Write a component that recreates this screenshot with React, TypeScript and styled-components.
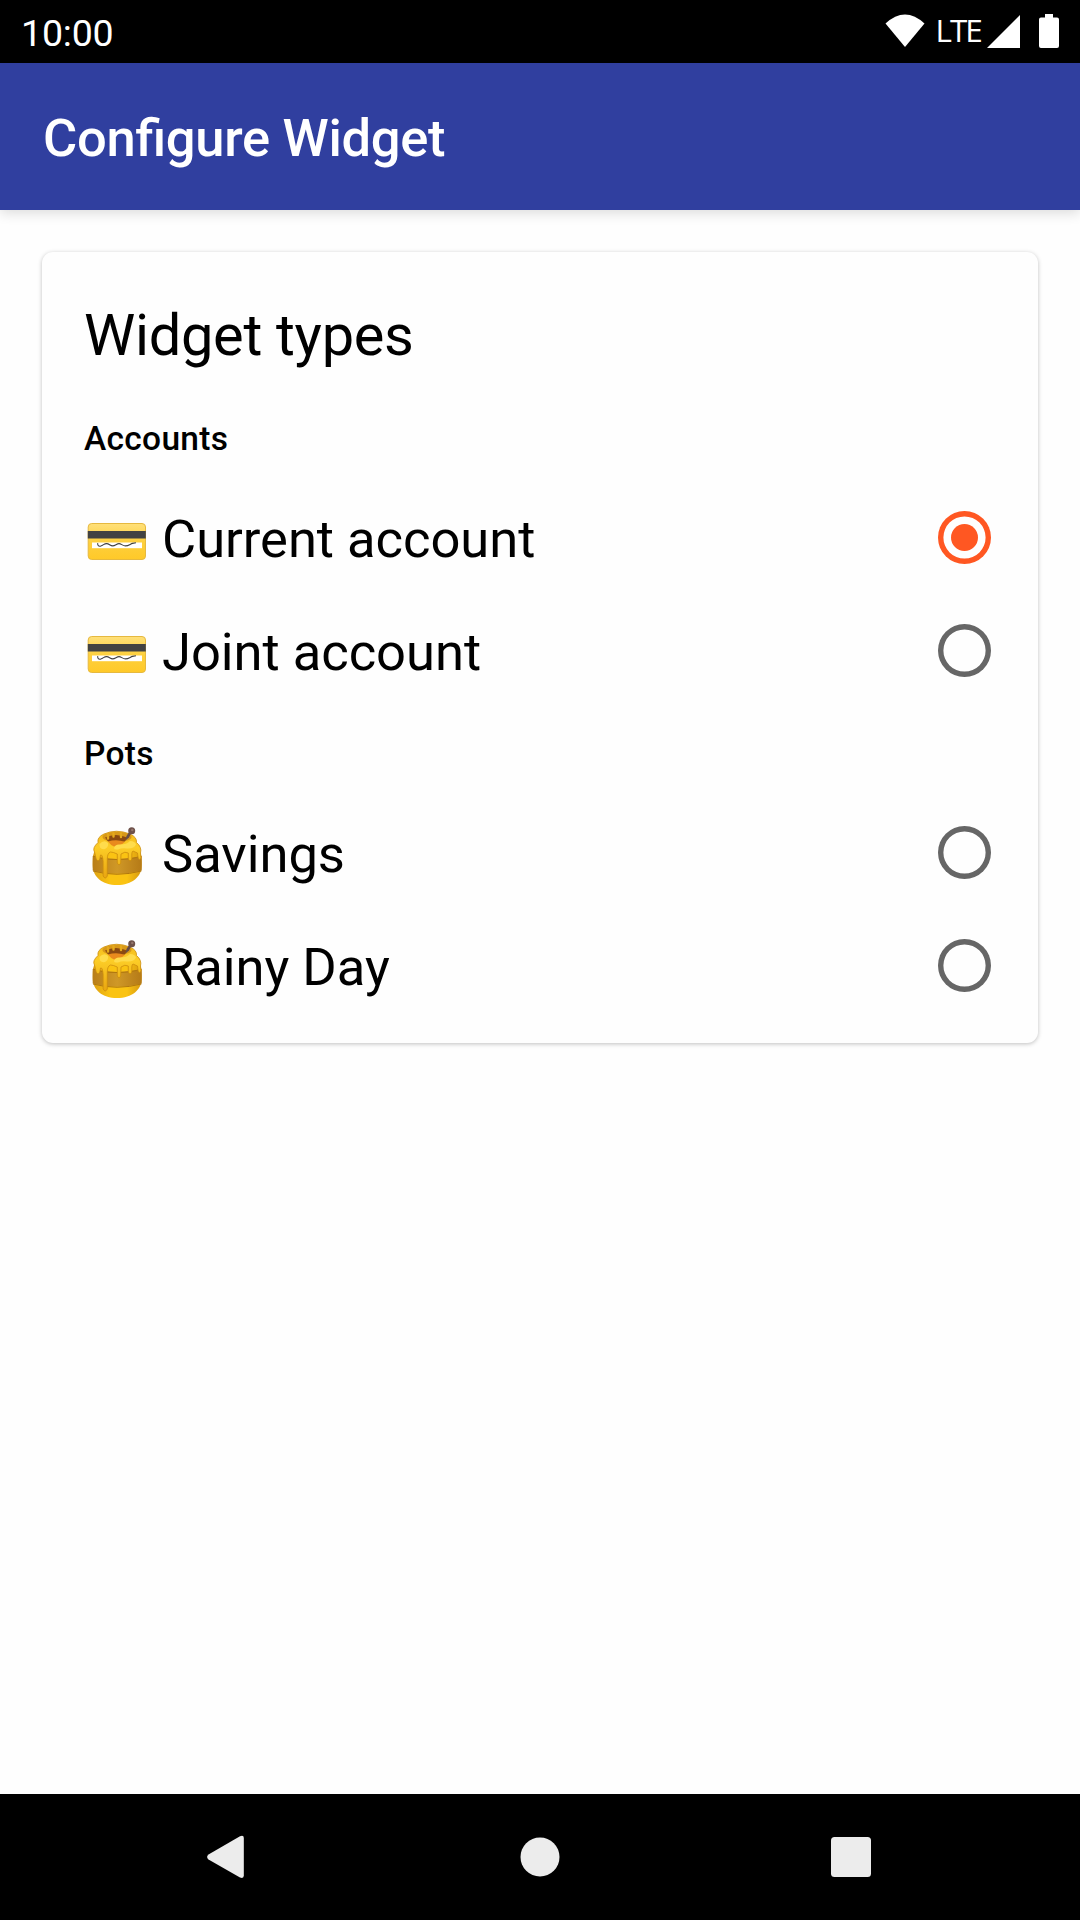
import React from "react";
import styled, { createGlobalStyle } from "styled-components";

const GlobalStyle = createGlobalStyle`
  * { box-sizing: border-box; }
  body { margin: 0; background: #fff; }
  svg { display: block; flex: none; }
`;

const Screen = styled.div`
  display: flex;
  flex-direction: column;
  width: 1080px;
  height: 1920px;
  background: #fefefe;
  color: #000;
  font-family: Roboto, "Noto Sans", sans-serif;
`;

const StatusBar = styled.header`
  display: flex;
  align-items: center;
  justify-content: space-between;
  height: 63px;
  padding: 0 20px 0 21px;
  background: #000;
  color: #fff;
`;

const Clock = styled.span`
  font-size: 37.5px;
  line-height: 63px;
  letter-spacing: -0.2px;
  padding-top: 3px;
`;

const StatusIcons = styled.div`
  display: flex;
  align-items: center;
  height: 63px;
  padding-bottom: 1px;
`;

const Network = styled.span`
  width: 51.5px;
  margin-left: 10.5px;
  padding-bottom: 2px;
  font-family: "Open Sans", "Noto Sans", sans-serif;
  font-size: 31.5px;
  line-height: 60px;
  letter-spacing: -2px;
`;

const AppBar = styled.div`
  display: flex;
  align-items: center;
  height: 147px;
  padding: 3px 43px 0;
  background: #303f9f;
  color: #fff;
  box-shadow: 0 3px 12px rgba(0, 0, 0, 0.14);
`;

const Title = styled.h1`
  margin: 0;
  font-size: 52.5px;
  font-weight: 500;
  line-height: 62px;
  letter-spacing: -0.3px;
  font-feature-settings: "liga" 1;
`;

const Content = styled.main`
  flex: 1;
  padding: 42px;
`;

const Card = styled.section`
  display: flex;
  flex-direction: column;
  height: 791px;
  padding: 42px;
  border-radius: 11px;
  background: #fefefe;
  box-shadow: 0 1px 4px rgba(0, 0, 0, 0.25);
`;

const CardTitle = styled.h2`
  margin: 0 0 21px;
  font-size: 57.75px;
  font-weight: 400;
  line-height: 82px;
  letter-spacing: -0.3px;
`;

const GroupBlock = styled.div`
  padding-top: 22px;
  margin-bottom: 3px;
`;

const Group = styled.h3`
  margin: 0 0 24px;
  font-size: 33.5px;
  font-weight: 500;
  line-height: 40px;
  letter-spacing: 0.3px;
`;

const Row = styled.label`
  display: flex;
  align-items: center;
  height: 113px;
`;

const Emoji = styled.svg`
  width: 66px;
  height: 64px;
`;

const RowLabel = styled.span`
  flex: 1;
  margin: 0 0 1px 12px;
  font-size: 52.5px;
  line-height: 62px;
  letter-spacing: -0.03px;
`;

const Radio = styled.span<{ $on?: boolean }>`
  display: grid;
  place-items: center;
  width: 53px;
  height: 53px;
  margin: 0 5px 4px 0;
  border-radius: 50%;
  box-shadow: inset 0 0 0 5.4px ${(p) => (p.$on ? "#ff5722" : "#666")};
  &::after {
    content: "";
    width: 27px;
    height: 27px;
    border-radius: 50%;
    background: ${(p) => (p.$on ? "#ff5722" : "transparent")};
  }
`;

const NavBar = styled.nav`
  display: flex;
  align-items: center;
  justify-content: space-between;
  height: 126px;
  padding: 0 206px;
  background: #000;
`;

const CardEmoji = () => (
  <Emoji viewBox="0 0 66 64">
    <defs>
      <linearGradient id="cardFill" x1="0" y1="0" x2="0" y2="1">
        <stop offset="0" stopColor="#ffe07a" />
        <stop offset="0.5" stopColor="#fdd03f" />
        <stop offset="1" stopColor="#ffc928" />
      </linearGradient>
    </defs>
    <rect x="4.200" y="15.500" width="57.300" height="36" rx="3.500" fill="url(#cardFill)" stroke="#e6b93f" strokeWidth="1" />
    <rect x="3.800" y="23" width="58" height="7.500" fill="#424242" />
    <rect x="8" y="34.500" width="50" height="5.700" fill="#fff" />
    <path d="M13.700 35.100q-.3 3.700 3 3c3-1 3.500-2.700 6-2.500s3.500 2.300 6 2.300 4-2.300 6.300-2.300 3.500 2.300 6.500 2.300 5-2 7-2.500l3.500-.7" fill="none" stroke="#424242" strokeWidth="1.100" />
  </Emoji>
);

const PotEmoji = () => (
  <Emoji viewBox="0 0 66 64">
    <defs>
      <linearGradient id="potFill" x1="0" x2="1">
        <stop offset="0" stopColor="#dda012" />
        <stop offset="0.35" stopColor="#fac312" />
        <stop offset="0.7" stopColor="#fac312" />
        <stop offset="1" stopColor="#d69810" />
      </linearGradient>
      <linearGradient id="potBand" x1="0" x2="1">
        <stop offset="0" stopColor="#b97e18" />
        <stop offset="0.5" stopColor="#cf9827" />
        <stop offset="1" stopColor="#b57a17" />
      </linearGradient>
      <linearGradient id="honey" x1="0" y1="0" x2="0" y2="1">
        <stop offset="0" stopColor="#f3ba1c" />
        <stop offset="0.35" stopColor="#fccd27" />
        <stop offset="1" stopColor="#e9a510" />
      </linearGradient>
    </defs>
    <path d="M14 24C9 28 8.700 33 8.700 42C8.700 54 18 62 33 62S57.700 54 57.700 42C57.700 33 57 28 52 24Z" fill="url(#potFill)" />
    <path d="M8.700 33Q33 39 57.700 33V47.500Q33 54 8.700 47.500Z" fill="url(#potBand)" />
    <path d="M9 48Q33 54.500 57.400 48" fill="none" stroke="#b0770f" strokeWidth="1" />
    <path d="M9 33Q18 36.500 33 36.500T57.400 33" fill="none" stroke="#b0770f" strokeWidth="1" />
    <path d="M20 11Q32 5.500 46 11Q53 14 52.500 19.500Q58 24 56.500 30L57 35Q55.500 38 54.200 35L53.500 30L49 28Q48 28 47.800 31V36Q46 39.500 44.300 36V30Q41 28 37 31L36.700 40Q35 43.500 33.300 40V31Q29 29 26.500 29Q23.300 30 23.300 36V53Q21.200 57 19.100 53V38Q18.500 31 16.500 32L15.800 36Q14 39.500 12.200 36L10.500 29Q8 25 14 19.500Q13 14 20 11Z" fill="url(#honey)" stroke="#cb8d0e" strokeWidth=".8" />
    <ellipse cx="33" cy="14" rx="14.500" ry="5" fill="#d7981a" />
    <path d="M21 14.500Q32 9.500 43 14.500L41 18.500Q31 21 24 18.500Z" fill="#8b4a11" />
    <path d="M24 18.500Q32 15.800 41 18.700Q36 23.500 30 23.500Q27 22.500 24 18.500Z" fill="#e98a1d" />
    <path d="M24 15.500V11.500M29.500 13.500V10.500M37 14V10.500" stroke="#e5a91c" strokeWidth="2.400" strokeLinecap="round" />
    <path d="M30 25Q31 21 36 21.500Q43 21.500 46 18Q51 18 52 21.500Q50 26 43 25.500Q38 24.500 34 26.500Q30 27 30 25Z" fill="#ffdc4c" />
    <path d="M15.500 21Q20 16 24 20Q25 23.500 21 26Q15 27 15.500 21Z" fill="#ffdc4c" />
    <path d="M41.500 17.500L42.500 13L46 7.500L48 9L45 14.500Z" fill="#674c45" />
    <circle cx="47.700" cy="7.800" r="3.500" fill="#6d514a" />
    <circle cx="48.300" cy="7" r="1.200" fill="#94756c" />
  </Emoji>
);

const groups = [
  { name: "Accounts", Icon: CardEmoji, items: ["Current account", "Joint account"] },
  { name: "Pots", Icon: PotEmoji, items: ["Savings", "Rainy Day"] },
];

export default function App() {
  return (
    <Screen>
      <GlobalStyle />
      <StatusBar>
        <Clock>10:00</Clock>
        <StatusIcons>
          <svg width="40" height="34" viewBox="0 0 40 34">
            <path d="M.5 9.500Q20-8.500 39.500 9.500L20 33Z" fill="#fff" />
          </svg>
          <Network>LTE</Network>
          <svg width="33" height="33" viewBox="0 0 33 33"><path d="M0 33L33 0V33Z" fill="#fff" /></svg>
          <svg width="40" height="34" viewBox="0 0 40 34">
            <path d="M25 0h8v3.500h4q2 0 2 2V32q0 2-2 2H21q-2 0-2-2V5.500q0-2 2-2h4Z" fill="#fff" />
          </svg>
        </StatusIcons>
      </StatusBar>
      <AppBar><Title>Configure Widget</Title></AppBar>
      <Content>
        <Card>
          <CardTitle>Widget types</CardTitle>
          {groups.map(({ name, Icon, items }) => (
            <GroupBlock key={name}>
              <Group>{name}</Group>
              {items.map((item) => (
                <Row key={item}>
                  <Icon />
                  <RowLabel>{item}</RowLabel>
                  <Radio $on={item === "Current account"} />
                </Row>
              ))}
            </GroupBlock>
          ))}
        </Card>
      </Content>
      <NavBar>
        <svg width="43" height="44" viewBox="0 0 43 44">
          <path d="M2.500 19.500L34 1.200Q37.800 -.3 37.800 3V40.500Q37.800 44 34 42.500L2.500 24.500Q-.3 22 2.500 19.500Z" fill="#ececec" />
        </svg>
        <svg width="40" height="40" viewBox="0 0 40 40"><circle cx="20" cy="20" r="19.500" fill="#ececec" /></svg>
        <svg width="43" height="40" viewBox="0 0 43 40"><rect width="40" height="40" rx="3.500" fill="#ececec" /></svg>
      </NavBar>
    </Screen>
  );
}
